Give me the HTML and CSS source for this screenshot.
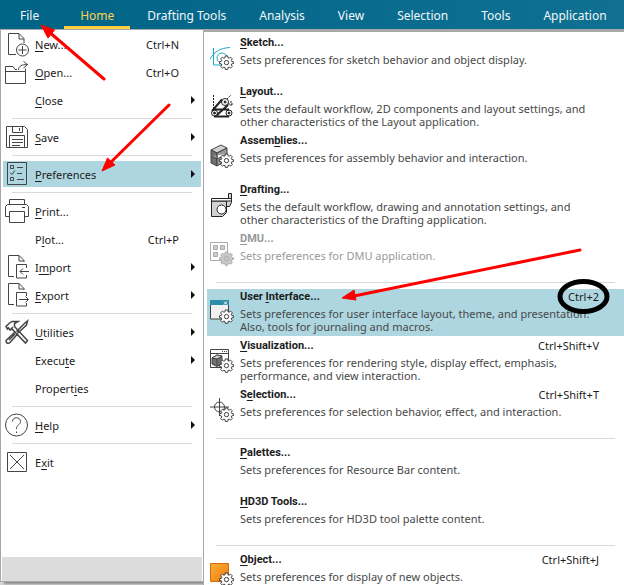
FILE: index.html
```html
<!DOCTYPE html>
<html lang="en">
<head>
<meta charset="utf-8">
<title>Preferences menu</title>
<link rel="stylesheet" href="styles.css">
</head>
<body>
<svg class="defs" aria-hidden="true">
  <symbol id="gear" viewBox="0 0 16 16">
    <path d="M6.7 1h2.6l.3 1.900 1.200.500 1.600-1.100 1.800 1.800-1.100 1.600.500 1.200 1.900.3v1.900l-1.900.3-.500 1.200 1.100 1.600-1.800 1.800-1.600-1.100-1.200.500-.3 1.900H6.700l-.3-1.900-1.200-.500-1.600 1.100-1.800-1.800 1.100-1.600-.500-1.200-1.900-.3V7.200l1.900-.3.500-1.200-1.100-1.600 1.800-1.800 1.600 1.100 1.200-.500z"/>
    <circle cx="8" cy="8.1" r="2.3"/>
  </symbol>
</svg>
<nav class="ribbon">
  <a class="tab tab-file" href="#">File</a>
  <a class="tab active" href="#">Home</a>
  <a class="tab" href="#">Drafting Tools</a>
  <a class="tab" href="#">Analysis</a>
  <a class="tab" href="#">View</a>
  <a class="tab" href="#">Selection</a>
  <a class="tab" href="#">Tools</a>
  <a class="tab" href="#">Application</a>
</nav>
<main class="menus">
  <div class="file-menu">
    <div class="items">
      <button class="item"><svg class="icon" viewBox="0 0 24 24"><path d="M11 22.500H3.500V1.500H14l5 5V11M14 1.500V7h5"/><circle cx="17.500" cy="18" r="6"/><path d="M17.500 14v8M13.500 18h8"/></svg><span class="label"><u>N</u>ew...</span><span class="key">Ctrl+N</span></button>
      <button class="item"><svg class="icon" viewBox="0 0 24 24"><path d="M20.500 11.500v12H.500v-17H8l2 3h2M.500 11.500h20v-3M13.500 10c0-4 3-5.500 9-5.500M18.500 1.500l4 3-4 3.500"/></svg><span class="label"><u>O</u>pen...</span><span class="key">Ctrl+O</span></button>
      <button class="item"><span class="icon"></span><span class="label"><u>C</u>lose</span><span class="arrow"></span></button>
      <hr>
      <button class="item"><svg class="icon" viewBox="0 0 24 24"><path d="M1.500 1.500h18l3 3v18h-21zM7.500 1.500v6h10v-6M14.500 3v3M4.500 22.500v-12h15v12M7 14.500h11M7 17.500h11M7 20.500h8"/></svg><span class="label"><u>S</u>ave</span><span class="arrow"></span></button>
      <hr>
      <button class="item selected"><svg class="icon" viewBox="0 0 24 24"><path d="M2.500.500h19v22h-19zM5.500 3.500h3v3h-3zM5.500 15.500h3v3h-3zM12 5.500h6M12 11.500h5M12 17.500h7M5 10.500l2 2 3-4"/></svg><span class="label"><u>P</u>references</span><span class="arrow"></span></button>
      <hr>
      <button class="item"><svg class="icon" viewBox="0 0 24 24"><path d="M4.500 5.500v-5h15v5M4.500 17.500h-4v-10l2-2h19l2 2v10h-4M17 8.500h3M4.500 12.500h15v11h-15z"/></svg><span class="label"><u>P</u>rint...</span></button>
      <button class="item"><span class="icon"></span><span class="label">P<u>l</u>ot...</span><span class="key">Ctrl+P</span></button>
      <button class="item"><svg class="icon" viewBox="0 0 24 24"><path d="M9 21.500H3.500V.500H14l5 5V7M14 .500V6h5M21.500 13v-3.500h-10v13.500h10v-3M24 16.500h-9M18 13.500l-3 3 3 3"/></svg><span class="label">I<u>m</u>port</span><span class="arrow"></span></button>
      <button class="item"><svg class="icon" viewBox="0 0 24 24"><path d="M9 21.500H3.500V.500H14l5 5V7M14 .500V6h5M21.500 13v-3.500h-10v13.500h10v-3M14 16.500h9.500M20.500 13.500l3 3-3 3"/></svg><span class="label"><u>E</u>xport</span><span class="arrow"></span></button>
      <hr>
      <button class="item"><svg class="icon thick" viewBox="0 0 24 24"><path d="M1 6.500l3-3 3-2h6l-3.500 2v3l13 14-2 2.500-13.500-14-2 1-1.500-2-1 1zM8 7l-2 2M20 3l2.500-2-1 4-8 7.500-1.500-1.500zM10 12l-9 8.500c0 3 2.500 3.500 4 2l8-9M4 20l6-6"/></svg><span class="label"><u>U</u>tilities</span><span class="arrow"></span></button>
      <button class="item"><span class="icon"></span><span class="label">Execu<u>t</u>e</span><span class="arrow"></span></button>
      <button class="item"><span class="icon"></span><span class="label">Propert<u>i</u>es</span></button>
      <hr>
      <button class="item"><svg class="icon" viewBox="0 0 24 24"><circle cx="11.500" cy="12" r="11"/><path d="M7.500 8.500c0-5 8-5 8 0 0 3.500-4 3-4 7.500M11.500 18.500v1.500"/></svg><span class="label"><u>H</u>elp</span><span class="arrow"></span></button>
      <hr>
      <button class="item"><svg class="icon" viewBox="0 0 24 24"><path d="M2.500 2.500h19v19h-19zM5 5l14 14M19 5L5 19"/></svg><span class="label">E<u>x</u>it</span></button>
    </div>
    <div class="footer"></div>
  </div>
  <div class="submenu">
    <button class="pref"><svg class="icon" viewBox="0 0 24 24"><g class="cyan"><path d="M3.500 2v17H12M0 13C5 5 11 2 20 1.500"/><circle cx="12" cy="12" r="5"/></g><use class="gear" href="#gear" x="9" y="9" width="15" height="15"/></svg><span class="body"><span class="title"><b><u>S</u>ketch...</b></span><span class="desc">Sets preferences for sketch behavior and object display.</span></span></button>
    <button class="pref"><svg class="icon black" viewBox="0 0 24 24"><circle cx="4.500" cy="18" r="3"/><circle cx="19" cy="18" r="3"/><circle cx="15" cy="7" r="3.500"/><circle class="dot" cx="4.500" cy="18" r="1"/><circle class="dot" cx="19" cy="18" r="1"/><circle class="dot" cx="15" cy="7" r="1"/><path class="belt" d="M2 16L12 4.500M7 20L18 10M4 14.500h15M4 21.500h15"/><path class="dash" d="M3.500 0v13M17 4l4-4M18 9h5M21 6v6"/></svg><span class="body"><span class="title"><b><u>L</u>ayout...</b></span><span class="desc">Sets the default workflow, 2D components and layout settings, and<br>other characteristics of the Layout application.</span></span></button>
    <button class="pref"><svg class="icon" viewBox="0 0 24 24"><path class="light" d="M1 6l10-5 6 3L7 9z"/><path class="mid" d="M1 6l6 3v13l-6-3z"/><path class="shade" d="M7 9l10-5v12L7 22zM1 12l6 3 10-5"/><use class="gear" href="#gear" x="9" y="9" width="15" height="15"/></svg><span class="body"><span class="title"><b>Assem<u>b</u>lies...</b></span><span class="desc">Sets preferences for assembly behavior and interaction.</span></span></button>
    <button class="pref"><svg class="icon black" viewBox="0 0 24 24"><path class="light" d="M1.500 8v15.500h11l4-4V8z"/><circle class="paper" cx="11.500" cy="16.500" r="4.500"/><path class="light" d="M16.500 8v5.500h3l2-4V.500h-3V5"/><path class="paper" d="M1.500 5.500h20v2.500h-20z"/></svg><span class="body"><span class="title"><b><u>D</u>rafting...</b></span><span class="desc">Sets the default workflow, drawing and annotation settings, and<br>other characteristics of the Drafting application.</span></span></button>
    <button class="pref" disabled><svg class="icon" viewBox="0 0 24 24"><path d="M11 18.500H.500V.500h17v10"/><path class="tiles" d="M3.500 3.500h4v4h-4zM10.500 3.500h4v4h-4zM3.500 10.500h4v4h-4z"/><use class="gear" href="#gear" x="9" y="9" width="15" height="15"/></svg><span class="body"><span class="title"><b><u>D</u>MU...</b></span><span class="desc">Sets preferences for DMU application.</span></span></button>
    <hr>
    <button class="pref selected"><svg class="icon" viewBox="0 0 24 24"><path class="window" d="M.500 1h18v18H.500z"/><path class="teal" d="M0 0h19v5H0z"/><path class="white-line" d="M14 1.500l3 3M17 1.500l-3 3"/><use class="gear" href="#gear" x="9" y="9" width="15" height="15"/></svg><span class="body"><span class="title"><b>User <u>I</u>nterface...</b><span class="key">Ctrl+2</span></span><span class="desc">Sets preferences for user interface layout, theme, and presentation.<br>Also, tools for journaling and macros.</span></span></button>
    <button class="pref"><svg class="icon" viewBox="0 0 24 24"><path d="M.500.500h18v18H.500zM.500 4.500h18M12 2.500h1M14 2.500h1M16 2.500h1"/><path class="mid" d="M2 9l5-3 5 1v8l-5 2.500-5-2.500z"/><path class="light" d="M2 9l5-3 5 1-5 3zM7 10v7"/><use class="gear" href="#gear" x="9" y="9" width="15" height="15"/></svg><span class="body"><span class="title"><b><u>V</u>isualization...</b><span class="key">Ctrl+Shift+V</span></span><span class="desc">Sets preferences for rendering style, display effect, emphasis,<br>performance, and view interaction.</span></span></button>
    <button class="pref"><svg class="icon" viewBox="0 0 24 24"><circle cx="9.500" cy="9" r="5"/><path d="M9.500 0v18M0 9h19"/><use class="gear" href="#gear" x="9" y="9" width="15" height="15"/></svg><span class="body"><span class="title"><b>S<u>e</u>lection...</b><span class="key">Ctrl+Shift+T</span></span><span class="desc">Sets preferences for selection behavior, effect, and interaction.</span></span></button>
    <hr>
    <button class="pref"><span class="icon"></span><span class="body"><span class="title"><b><u>P</u>alettes...</b></span><span class="desc">Sets preferences for Resource Bar content.</span></span></button>
    <button class="pref"><span class="icon"></span><span class="body"><span class="title"><b><u>H</u>D3D Tools...</b></span><span class="desc">Sets preferences for HD3D tool palette content.</span></span></button>
    <hr>
    <button class="pref"><svg class="icon" viewBox="0 0 24 24"><defs><linearGradient id="orange" x2="1" y2="1"><stop stop-color="#fbb034"/><stop offset="1" stop-color="#ee7a10"/></linearGradient></defs><path class="orange" d="M.500.500h18v18H.500z"/><use class="gear" href="#gear" x="9" y="9" width="15" height="15"/></svg><span class="body"><span class="title"><b><u>O</u>bject...</b><span class="key">Ctrl+Shift+J</span></span><span class="desc">Sets preferences for display of new objects.</span></span></button>
  </div>
</main>
<svg class="marks" width="624" height="585" viewBox="0 0 624 585" aria-hidden="true">
  <path class="stroke" d="M104 79L48 31M169 105L109 164M580 250L354 296"/>
  <path class="head" d="M41 25l13.500 5-6.500 8zM102 171l5.500-13 7.500 7zM342 298l12-8 2 10z"/>
  <ellipse cx="583.500" cy="296.500" rx="23.500" ry="15"/>
</svg>
</body>
</html>
```

FILE: styles.css
```css
* { box-sizing: border-box; }

body {
  margin: 0;
  height: 100vh;
  display: flex;
  flex-direction: column;
  overflow: hidden;
  background: #d4d4d4;
  font: 11px/13px "Noto Sans", sans-serif;
  color: #1c1c1c;
}

.defs { position: absolute; width: 0; height: 0; }

.ribbon {
  display: flex;
  gap: 1px;
  flex: none;
  height: 29px;
  padding-left: 4px;
  background: linear-gradient(90deg, #006487, #0f7092);
}

.tab {
  padding: 6px 16px 0;
  border-bottom: 3px solid transparent;
  font: 12px/20px "Noto Sans", sans-serif;
  color: #f2f7f9;
  text-decoration: none;
  white-space: nowrap;
}
.tab-file { margin-right: 8px; }
.tab.active { color: #ffd24d; border-color: #ffcf40; }

.menus {
  flex: 1;
  min-height: 0;
  display: grid;
  grid-template-columns: 203px 1fr;
}

.file-menu {
  display: flex;
  flex-direction: column;
  margin-bottom: 3px;
  border: solid #a8a8a8;
  border-width: 1px 0 1px 1px;
  box-shadow: 4px 2px 2px #8c8c8c;
  background: #fff;
}
.items {
  flex: 1;
  display: flex;
  flex-direction: column;
  padding: 0 2px;
}
.footer { height: 24px; margin: 0 1px; background: #dcdcdc; }

button {
  display: flex;
  flex: none;
  padding: 0;
  border: 0;
  background: none;
  font: inherit;
  color: inherit;
  text-align: left;
  white-space: nowrap;
}

u { text-underline-offset: 2px; }

.item {
  align-items: center;
  height: 26px;
  margin: 1px 0;
  padding: 0 6px 0 2px;
}
.selected { background: #aed6e0; }
.label { flex: 1; margin-left: 6px; }
.item .key { margin-right: 16px; }
.arrow {
  border: solid transparent;
  border-width: 4px 0 4px 4px;
  border-left-color: #111;
}

hr {
  flex: none;
  height: 1px;
  margin: 4px 9px;
  border: 0;
  background: #d9d9d9;
}

.submenu {
  position: relative;
  display: flex;
  flex-direction: column;
  padding-top: 2px;
  border: solid #a8a8a8;
  border-width: 3px 0 0 1px;
  background: #fff;
  overflow: hidden;
}
.submenu hr { margin: 3px 9px 5px 12px; }

.pref {
  height: 47px;
  margin: 1px 0 1px 3px;
  padding: 1px 25px 0 3px;
}
.pref .icon { margin-top: 10px; }
.body { flex: 1; min-width: 0; margin-left: 6px; }
.title { display: flex; justify-content: space-between; margin-bottom: 4px; }
.title b { font: 700 11px/13px Roboto, sans-serif; }
.desc { display: block; color: #484848; }
.pref:disabled, .pref:disabled .desc { color: #999; }

.icon {
  flex: none;
  width: 24px;
  height: 24px;
  overflow: visible;
  fill: none;
  stroke: #444;
}
.thick { stroke-width: 1.5; }
.black { stroke: #222; }
.cyan { stroke: #1aa9c9; }
.gear { fill: #fff; stroke: #333; }
.dot { fill: #222; }
.belt { stroke-width: 2; }
.dash { stroke-dasharray: 2 1; }
.light { fill: #d2d2d2; }
.mid { fill: #707070; }
.shade { fill: #999; }
.paper { fill: #fff; }
.window { fill: #f0f0f0; }
.teal { fill: #2e8da8; stroke: none; }
.white-line { stroke: #fff; }
.orange { fill: url(#orange); stroke: #d46a10; }
.pref:disabled .icon { stroke: #aaa; }
.pref:disabled .gear { fill: #c8c8c8; stroke: #aaa; }
.tiles { fill: #ccc; }

.marks {
  position: absolute;
  top: 0;
  left: 0;
  fill: none;
  pointer-events: none;
}
.stroke { stroke: #f00; stroke-width: 3; stroke-linecap: round; }
.head { fill: #f00; stroke: #f00; stroke-linejoin: round; }
.marks ellipse { stroke: #000; stroke-width: 5; }
```
